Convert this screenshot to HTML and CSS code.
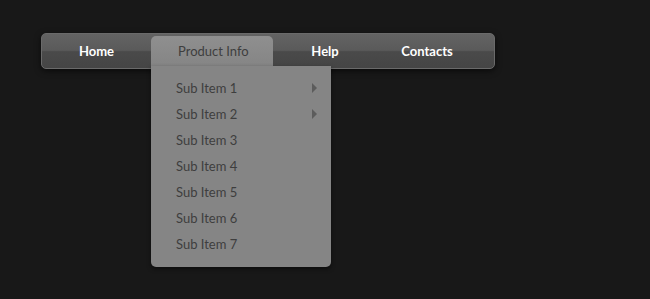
FILE: index.html
```html
<!DOCTYPE html>
<html lang="en">
  <head>
    <meta charset="UTF-8" />
    <meta name="viewport" content="width=device-width, initial-scale=1.0" />
    <title>Dropdown Menu</title>
    <link rel="stylesheet" href="styles.css">
  </head>
  <body>
    <nav class="menu">
      <ul class="menu-bar">
        <li class="menu-item home"><a href="#">Home</a></li>
        <li class="menu-item product open">
          <a href="#">Product Info</a>
          <ul class="submenu">
            <li class="has-sub"><a href="#">Sub Item 1</a></li>
            <li class="has-sub"><a href="#">Sub Item 2</a></li>
            <li><a href="#">Sub Item 3</a></li>
            <li><a href="#">Sub Item 4</a></li>
            <li><a href="#">Sub Item 5</a></li>
            <li><a href="#">Sub Item 6</a></li>
            <li><a href="#">Sub Item 7</a></li>
          </ul>
        </li>
        <li class="menu-item help"><a href="#">Help</a></li>
        <li class="menu-item contacts"><a href="#">Contacts</a></li>
      </ul>
    </nav>
  </body>
</html>
```

FILE: styles.css
```css
html,
body {
  margin: 0;
  padding: 0;
  background-color: #181818;
  height: 100%;
}
body {
  font-family: "Lato", "DejaVu Sans", sans-serif;
  padding: 33px 0 0 41px;
  box-sizing: border-box;
}
ul {
  list-style: none;
  margin: 0;
  padding: 0;
}
a {
  text-decoration: none;
}
.menu {
  width: 454px;
  height: 36px;
  box-sizing: border-box;
  border: 1px solid #6a6a6a;
  border-radius: 5px;
  background: linear-gradient(to bottom, #636363 0%, #5a5a5a 48%, #4a4a4a 52%, #454545 100%);
  box-shadow: 0 2px 6px rgba(0, 0, 0, 0.6);
}
.menu-bar {
  display: flex;
  height: 100%;
}
.menu-item {
  position: relative;
  text-align: center;
}
.menu-item > a {
  display: block;
  color: #fff;
  font-weight: bold;
  font-size: 13px;
  line-height: 34px;
}
.home {
  width: 109px;
}
.product {
  width: 122px;
}
.help {
  width: 104px;
}
.contacts {
  width: 100px;
}
.open > a {
  margin-top: 2px;
  padding-left: 27px;
  line-height: 30px;
  text-align: left;
  color: #3e3e3e;
  font-weight: normal;
  background: linear-gradient(to bottom, #8f8f8f, #858585);
  border-radius: 5px 5px 0 0;
}
.submenu {
  position: absolute;
  left: 0;
  top: 32px;
  width: 180px;
  padding: 9px 0 10px;
  background-color: #858585;
  border-radius: 0 0 5px 5px;
  box-shadow: 0 2px 4px rgba(0, 0, 0, 0.5);
  text-align: left;
}
.submenu li {
  position: relative;
}
.submenu a {
  display: block;
  padding-left: 25px;
  font-size: 13px;
  line-height: 26px;
  color: #3e3e3e;
}
.has-sub::after {
  content: "";
  position: absolute;
  right: 14px;
  top: 8px;
  border-left: 5px solid #5c5c5c;
  border-top: 5px solid transparent;
  border-bottom: 5px solid transparent;
}
```
